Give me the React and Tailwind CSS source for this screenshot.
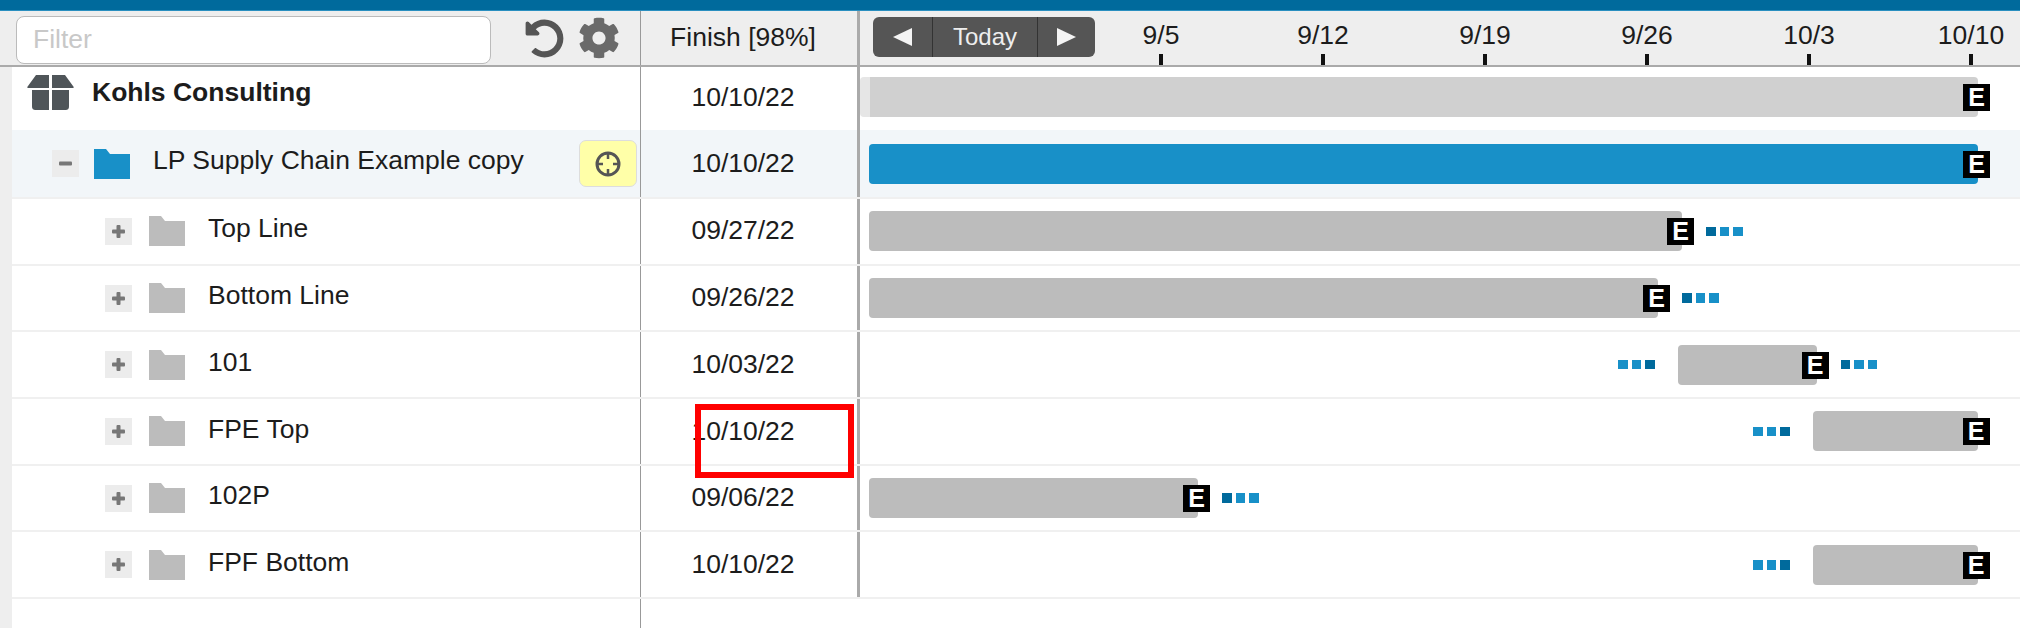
import { FaCog, FaUndoAlt } from "react-icons/fa";

const rows = [
  { name: "Top Line", finish: "09/27/22", bar: "ml-[9px] w-[813px]", post: true },
  { name: "Bottom Line", finish: "09/26/22", bar: "ml-[9px] w-[789px]", post: true },
  { name: "101", finish: "10/03/22", lead: "ml-[758px]", bar: "w-[139px]", pre: true, post: true },
  { name: "FPE Top", finish: "10/10/22", lead: "ml-[893px]", bar: "w-[165px]", pre: true },
  { name: "102P", finish: "09/06/22", bar: "ml-[9px] w-[329px]", post: true },
  { name: "FPF Bottom", finish: "10/10/22", lead: "ml-[893px]", bar: "w-[165px]", pre: true },
];

const ticks = ["9/5", "9/12", "9/19", "9/26", "10/3", "10/10"];

const BoxIcon = () => (
  <svg width="47" height="35" viewBox="0 0 47 35" className="shrink-0">
    <path d="M9 0H22V13H1C0 13 0 12 1 11Z" fill="#4f5559" />
    <path d="M38 0H25V13H46C47 13 47 12 46 11Z" fill="#4f5559" />
    <path d="M5 15H22V35H9C6 35 5 34 5 31Z" fill="#4f5559" />
    <path d="M42 15H25V35H38C41 35 42 34 42 31Z" fill="#4f5559" />
  </svg>
);

const FolderIcon = ({ color }) => (
  <svg width="36" height="30" viewBox="0 0 36 30" className="shrink-0">
    <path d="M0 0H12L16 5H36V30H0Z" fill={color} />
  </svg>
);

const Toggle = ({ open }) => (
  <div className="w-[27px] h-[27px] bg-[#ececec] flex items-center justify-center shrink-0">
    <svg width="15" height="15" viewBox="0 0 15 15">
      <rect x="1" y="5.5" width="13" height="4" rx="1" fill="#777" />
      {!open && <rect x="5.5" y="1" width="4" height="13" rx="1" fill="#777" />}
    </svg>
  </div>
);

const Crosshair = () => (
  <svg width="28" height="28" viewBox="0 0 28 28">
    <circle cx="14" cy="14" r="11" fill="none" stroke="#555" strokeWidth="3" />
    <path d="M14 3V9M14 19V25M3 14H9M19 14H25" stroke="#555" strokeWidth="2.5" />
  </svg>
);

const Triangle = ({ right }) => (
  <svg width="19" height="18" viewBox="0 0 19 18">
    <path d={right ? "M0 0L19 9L0 18Z" : "M19 0L0 9L19 18Z"} fill="#f4f4f4" />
  </svg>
);

const Dots = ({ colors }) => (
  <div className="flex gap-[4px] shrink-0">
    {colors.map((c, i) => (
      <div key={i} className="w-[9.5px] h-[9.5px]" style={{ backgroundColor: c }} />
    ))}
  </div>
);

const Bar = ({ className, children }) => (
  <div className={`relative h-[40px] rounded-[4px] shrink-0 ${className}`}>
    {children}
    <div className="absolute right-[-12px] top-[7px] w-[27px] h-[27px] bg-black text-white flex items-center justify-center text-[25px] font-bold leading-none">
      E
    </div>
  </div>
);

export default function App() {
  return (
    <div className="w-[2020px] h-[628px] relative overflow-hidden bg-white text-[26.5px] text-[#1c1c1c] font-['Liberation_Sans',Arial,sans-serif]">
      <div className="h-[11px] bg-[#006a9c] border-b border-[#2a8fc0]" />

      {/* header */}
      <div className="h-[56px] flex bg-[#eee] border-b-2 border-[#aaa]">
        <div className="w-[641px] flex items-center pl-[16px] border-r border-[#999]">
          <div className="w-[475px] h-[48px] mt-[3px] bg-white border border-[#bbb] rounded-[8px] pl-[16px] flex items-center text-[#c8c8c8]">
            Filter
          </div>
          <FaUndoAlt className="ml-[34px] text-[#555] text-[39px]" />
          <FaCog className="ml-[14px] text-[#6a6a6a] text-[42px]" />
        </div>
        <div className="w-[216px] flex items-center justify-center pr-[12px]">Finish [98%]</div>
        <div className="flex-1 flex items-center border-l-[3px] border-[#aaa] overflow-hidden">
          <div className="ml-[13px] w-[222px] h-[40px] shrink-0 bg-[#555] rounded-[6px] flex text-[#eee] text-[24px] -mt-[3px]">
            <div className="w-[60px] flex items-center justify-center border-r border-[#333]">
              <Triangle />
            </div>
            <div className="flex-1 flex items-center justify-center">Today</div>
            <div className="w-[58px] flex items-center justify-center border-l border-[#333]">
              <Triangle right />
            </div>
          </div>
          <div className="grid grid-cols-6 w-[972px] -ml-[15px] shrink-0 h-full">
            {ticks.map((t) => (
              <div key={t} className="flex flex-col items-center justify-end">
                <span className="leading-none mb-[6px]">{t}</span>
                <div className="w-[4px] h-[11px] bg-[#111]" />
              </div>
            ))}
          </div>
        </div>
      </div>

      {/* body */}
      <div className="flex h-[561px]">
        <div className="w-[12px] bg-[#eee] shrink-0" />
        <div className="flex-1 flex flex-col">
          <div className="h-[63px] flex">
            <div className="w-[629px] flex items-center pl-[15px] pb-[12px] border-r border-[#999]">
              <BoxIcon />
              <span className="ml-[18px] font-bold">Kohls Consulting</span>
            </div>
            <div className="w-[216px] flex items-center justify-center pr-[12px] pb-[2px]">10/10/22</div>
            <div className="flex-1 flex items-center border-l-[3px] border-[#aaa] pb-[4px]">
              <Bar className="w-[1118px] bg-[#d0d0d0] border-l-[10px] border-[#e6e6e6]" />
            </div>
          </div>

          <div className="h-[69px] flex bg-[#f2f6f9] border-b-2 border-[#f0f0f0]">
            <div className="w-[629px] flex items-center pl-[40px] border-r border-[#999]">
              <Toggle open />
              <div className="ml-[15px]">
                <FolderIcon color="#1890c8" />
              </div>
              <span className="ml-[23px] pb-[6px]">LP Supply Chain Example copy</span>
              <div className="ml-auto mr-[3px] w-[58px] h-[47px] bg-[#ffffa8] border border-[#ddd] rounded-[7px] flex items-center justify-center">
                <Crosshair />
              </div>
            </div>
            <div className="w-[216px] flex items-center justify-center pr-[12px]">10/10/22</div>
            <div className="flex-1 flex items-center border-l-[3px] border-[#aaa]">
              <Bar className="ml-[9px] w-[1109px] bg-[#1890c8]" />
            </div>
          </div>

          {rows.map((r) => (
            <div key={r.name} className="h-[66.7px] flex border-b-2 border-[#f0f0f0]">
              <div className="w-[629px] flex items-center pl-[93px] border-r border-[#999]">
                <Toggle />
                <div className="ml-[17px]">
                  <FolderIcon color="#bcbcbc" />
                </div>
                <span className="ml-[23px] pb-[4px]">{r.name}</span>
              </div>
              <div className="w-[216px] flex items-center justify-center pr-[12px]">{r.finish}</div>
              <div className="flex-1 flex items-center border-l-[3px] border-[#aaa]">
                {r.pre && (
                  <div className={`${r.lead} mr-[23px]`}>
                    <Dots colors={["#1890c8", "#1890c8", "#006a9c"]} />
                  </div>
                )}
                <Bar className={`${r.bar} bg-[#bcbcbc]`} />
                {r.post && (
                  <div className="ml-[24px]">
                    <Dots colors={["#006a9c", "#1890c8", "#1890c8"]} />
                  </div>
                )}
              </div>
            </div>
          ))}

          <div className="flex-1 ml-[628px] border-l border-[#999]" />
        </div>
      </div>

      {/* annotation */}
      <div className="absolute left-[695px] top-[404px] w-[159px] h-[74px] border-[6px] border-[#f00]" />
    </div>
  );
}
